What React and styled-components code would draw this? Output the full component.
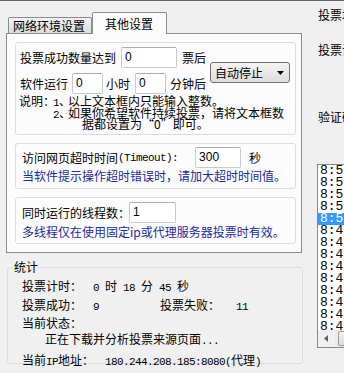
import React from "react";
import styled, { createGlobalStyle } from "styled-components";

const CJK = `"Noto Sans CJK SC", "Noto Sans", sans-serif`;
const MONO = `"Liberation Mono", "DejaVu Sans Mono", monospace`;
const SANS = `"Liberation Sans", Arial, sans-serif`;

const Global = createGlobalStyle`
  html, body { margin: 0; padding: 0; background: #f0f0f0; }
  body { font-family: ${CJK}; font-size: 12px; color: #000; }
  * { box-sizing: border-box; }
`;

const Screen = styled.div`
  width: 344px;
  height: 373px;
  overflow: hidden;
  display: flex;
  border-top: 1px solid #5f6770;
  background: #f0f0f0;
`;

const LeftCol = styled.div`
  flex: 0 0 303px;
  display: flex;
  flex-direction: column;
  padding: 11px 0 0 6px;
`;

const TabStrip = styled.div`
  display: flex;
  align-items: flex-end;
  height: 21px;
  padding-left: 2px;
  position: relative;
  z-index: 1;
`;

const Tab = styled.div`
  display: flex;
  align-items: center;
  border: 1px solid #898c95;
  border-bottom: none;
  line-height: 14px;
  white-space: nowrap;
  height: ${(p) => (p.$active ? "22px" : "16px")};
  margin-bottom: ${(p) => (p.$active ? "-1px" : "0")};
  padding: ${(p) => (p.$active ? "1px 13px 0 12px" : "1px 6px 0 4px")};
  background: ${(p) =>
    p.$active ? "#fcfcfc" : "linear-gradient(#f3f3f3, #dcdcdc)"};
  border-radius: 2px 2px 0 0;
`;

const Panel = styled.div`
  width: 296px;
  height: 220px;
  border: 1px solid #898c95;
  background: #fcfcfc;
  padding: 8px 0 0 8px;
  display: flex;
  flex-direction: column;
  gap: 8px;
`;

const Group = styled.div`
  width: 281px;
  height: ${(p) => p.$h}px;
  border: 1px solid #d5dfe5;
  border-radius: 3px;
  padding: ${(p) => p.$pad};
  overflow: hidden;
`;

const TopBlock = styled.div`
  display: flex;
  align-items: center;
`;

const Rows = styled.div`
  display: flex;
  flex-direction: column;
  gap: 5px;
`;

const Row = styled.div`
  display: flex;
  align-items: center;
  height: 21px;
  white-space: nowrap;
`;

const Text = styled.span`
  line-height: 14px;
`;

/* 半角字符：11px 等宽字体压到约 6px 一格 */
const Mono = styled.span`
  font-family: ${MONO};
  font-size: 11px;
  letter-spacing: -0.6px;
  white-space: pre;
`;

const Field = styled.input`
  width: ${(p) => p.$w}px;
  height: 21px;
  margin: 0 ${(p) => p.$mr || 0}px 0 ${(p) => p.$ml || 0}px;
  padding: 0 0 1px 3px;
  border: 1px solid #c6c9ce;
  border-top-color: #abadb3;
  border-radius: 2px;
  background: #fff;
  font-family: ${SANS};
  font-size: 12px;
  color: #000;
  outline: none;
`;

const Combo = styled.div`
  display: flex;
  align-items: center;
  justify-content: space-between;
  width: 80px;
  height: 21px;
  margin: 4px 0 0 4px;
  padding: 0 5px 0 4px;
  border: 1px solid #707070;
  border-radius: 3px;
  background: linear-gradient(#f4f4f4, #dddddd);
  line-height: 14px;
`;

const Notes = styled.div`
  margin-top: 1px;
  white-space: nowrap;
`;

const NoteLine = styled.div`
  height: 11.5px;
  line-height: 12px;
  padding-left: ${(p) => p.$indent || 0}px;
`;

const Head = styled.span`
  display: inline-block;
  width: 34px;
  margin-left: -1px;
`;

const Dun = styled.span`
  margin-right: -3px;
`;

const Hint = styled.div`
  color: #1b2a9e;
  line-height: 14px;
  margin-top: ${(p) => p.$mt}px;
  white-space: nowrap;
`;

const Stats = styled.fieldset`
  width: 296px;
  height: 103px;
  margin: 8px 0 0 1px;
  padding: 0;
  border: 1px solid #d5dfe5;
  border-radius: 3px;
  min-width: 0;
`;

const Legend = styled.legend`
  margin-left: 5px;
  padding: 0 1px;
  line-height: 12px;
`;

const StatBody = styled.div`
  padding: 5px 0 0 14px;
`;

const StatRow = styled.div`
  display: flex;
  align-items: baseline;
  line-height: 16px;
  white-space: pre;
  margin-top: ${(p) => p.$mt || 0}px;
  padding-left: ${(p) => p.$indent || 0}px;
`;

const StatLabel = styled.span`
  width: ${(p) => p.$w || 71}px;
  flex: 0 0 auto;
`;

const StatCell = styled.span`
  display: flex;
  align-items: baseline;
  width: ${(p) => p.$w}px;
`;

const RightCol = styled.div`
  flex: 1;
  display: flex;
  flex-direction: column;
  padding-left: 15px;
  overflow: hidden;
`;

const SideLabel = styled.div`
  line-height: 14px;
  white-space: nowrap;
  margin-top: ${(p) => p.$mt}px;
`;

const ListBox = styled.div`
  margin: 40px 0 0 -1px;
  width: 60px;
  height: 184px;
  border: 1px solid #828790;
  border-right: none;
  background: #fff;
  display: flex;
  flex-direction: column;
`;

const ListItems = styled.div`
  flex: 1;
  overflow: hidden;
`;

const ListItem = styled.div`
  height: 12px;
  line-height: 12px;
  padding-left: 2px;
  font-family: ${MONO};
  font-size: 13px;
  color: ${(p) => (p.$sel ? "#fff" : "#000")};
  background: ${(p) => (p.$sel ? "#3399ff" : "transparent")};
`;

const HScroll = styled.div`
  flex: 0 0 17px;
  display: flex;
  align-items: stretch;
  background: #eaeaea;
`;

const ScrollBtn = styled.div`
  width: 17px;
  display: flex;
  align-items: center;
  justify-content: center;
  background: #f0f0f0;
`;

const Thumb = styled.div`
  width: 40px;
  margin: 1px 0 1px 3px;
  border: 1px solid #9b9b9b;
  border-radius: 2px;
  background: linear-gradient(#f3f3f3, #dcdcdc);
`;

const times = [
  "8:50", "8:50", "8:50", "8:50", "8:50",
  "8:49", "8:49", "8:49", "8:49", "8:49", "8:49",
  "8:48", "8:48", "8:48",
];

export default function App() {
  return (
    <>
      <Global />
      <Screen>
        <LeftCol>
          <TabStrip>
            <Tab>网络环境设置</Tab>
            <Tab $active>其他设置</Tab>
          </TabStrip>
          <Panel>
            <Group $h={93} $pad="4px 0 0 4px">
              <TopBlock>
                <Rows>
                  <Row>
                    <Text>投票成功数量达到</Text>
                    <Field $w={56} $ml={5} $mr={5} defaultValue="0" readOnly />
                    <Text>票后</Text>
                  </Row>
                  <Row>
                    <Text>软件运行</Text>
                    <Field $w={31} $ml={4} $mr={3} defaultValue="0" readOnly />
                    <Text>小时</Text>
                    <Field $w={31} $ml={5} $mr={4} defaultValue="0" readOnly />
                    <Text>分钟后</Text>
                  </Row>
                </Rows>
                <Combo>
                  <span>自动停止</span>
                  <svg width="7" height="4" viewBox="0 0 7 4">
                    <path d="M0 0h7L3.5 4z" fill="#000" />
                  </svg>
                </Combo>
              </TopBlock>
              <Notes>
                <NoteLine>
                  <Head>说明：</Head>
                  <Mono>1</Mono>
                  <Dun>、</Dun>以上文本框内只能输入整数。
                </NoteLine>
                <NoteLine $indent={33}>
                  <Mono>2</Mono>
                  <Dun>、</Dun>如果你希望软件持续投票，请将文本框数
                </NoteLine>
                <NoteLine $indent={62}>据都设置为“0”即可。</NoteLine>
              </Notes>
            </Group>

            <Group $h={46} $pad="3px 0 0 6px">
              <Row>
                <Text>访问网页超时时间</Text>
                <Mono>(Timeout):</Mono>
                <Field $w={46} $ml={17} $mr={8} defaultValue="300" readOnly />
                <Text>秒</Text>
              </Row>
              <Hint $mt={1}>当软件提示操作超时错误时，请加大超时时间值。</Hint>
            </Group>

            <Group $h={47} $pad="4px 0 0 6px">
              <Row>
                <Text>同时运行的线程数：</Text>
                <Field $w={47} $ml={-1} defaultValue="1" readOnly />
              </Row>
              <Hint $mt={2}>多线程仅在使用固定ip或代理服务器投票时有效。</Hint>
            </Group>
          </Panel>

          <Stats>
            <Legend>统计</Legend>
            <StatBody>
              <StatRow>
                <StatLabel>投票计时：</StatLabel>
                <Mono>0 </Mono>时<Mono> 18 </Mono>分<Mono> 45 </Mono>秒
              </StatRow>
              <StatRow $mt={1}>
                <StatCell $w={138}>
                  <StatLabel>投票成功：</StatLabel>
                  <Mono>9</Mono>
                </StatCell>
                <StatLabel $w={76}>投票失败：</StatLabel>
                <Mono>11</Mono>
              </StatRow>
              <StatRow>
                <StatLabel>当前状态：</StatLabel>
              </StatRow>
              <StatRow $indent={23}>
                正在下载并分析投票来源页面<Mono>...</Mono>
              </StatRow>
              <StatRow $mt={3}>
                <StatLabel $w={83}>
                  当前<Mono>IP</Mono>地址：
                </StatLabel>
                <Mono>180.244.208.185:8080(</Mono>代理<Mono>)</Mono>
              </StatRow>
            </StatBody>
          </Stats>
        </LeftCol>

        <RightCol>
          <SideLabel $mt={7}>投票地址：</SideLabel>
          <SideLabel $mt={21}>投票设置：</SideLabel>
          <SideLabel $mt={53}>验证码：</SideLabel>
          <ListBox>
            <ListItems>
              {times.map((t, i) => (
                <ListItem key={i} $sel={i === 4}>
                  {t}
                </ListItem>
              ))}
            </ListItems>
            <HScroll>
              <ScrollBtn>
                <svg width="4" height="7" viewBox="0 0 4 7">
                  <path d="M4 0v7L0 3.5z" fill="#606060" />
                </svg>
              </ScrollBtn>
              <Thumb />
            </HScroll>
          </ListBox>
        </RightCol>
      </Screen>
    </>
  );
}
